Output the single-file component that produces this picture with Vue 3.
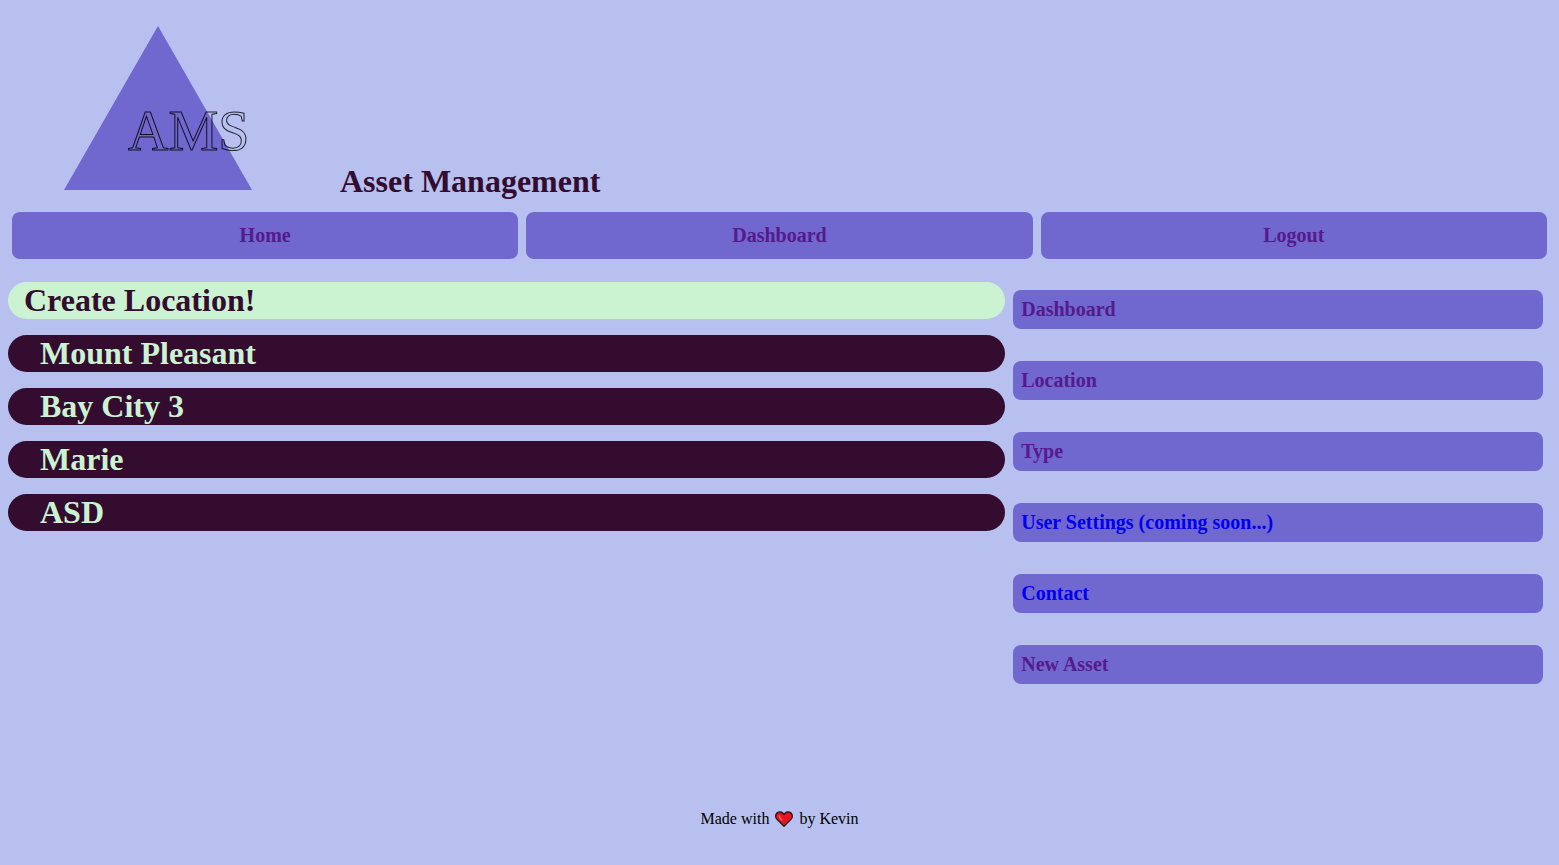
<script setup>
const navLinks = ['Home', 'Dashboard', 'Logout']
const locations = ['Mount Pleasant', 'Bay City 3', 'Marie', 'ASD']
const sideLinks = [
  { label: 'Dashboard', visited: true },
  { label: 'Location', visited: true },
  { label: 'Type', visited: true },
  { label: 'User Settings (coming soon...)', visited: false },
  { label: 'Contact', visited: false },
  { label: 'New Asset', visited: true },
]
</script>

<template>
  <div class="page">
    <header class="header">
      <svg class="logo" viewBox="0 0 300 200" role="img" aria-label="AMS">
        <polygon points="150,18 244,182 56,182" fill="#7067cf" />
        <text x="120" y="142" class="logo-text">AMS</text>
      </svg>
      <h1 class="title">Asset Management</h1>
    </header>

    <nav class="nav">
      <a v-for="label in navLinks" :key="label" href="#" class="nav-link">{{ label }}</a>
    </nav>

    <div class="content">
      <main class="locations">
        <a href="#" class="bar create">Create Location!</a>
        <a v-for="name in locations" :key="name" href="#" class="bar location">{{ name }}</a>
      </main>
      <aside class="side">
        <a
          v-for="link in sideLinks"
          :key="link.label"
          href="#"
          class="side-link"
          :class="{ visited: link.visited }"
        >{{ link.label }}</a>
      </aside>
    </div>

    <footer class="footer">
      <span>Made with</span>
      <svg class="heart" viewBox="0 0 18 16" role="img" aria-label="love">
        <path d="M9 15.2 1.800 8.100C.3 6.500.3 3.900 1.800 2.300 3.400.6 6 .5 7.600 2L9 3.300 10.400 2C12 .5 14.600.6 16.200 2.300 17.700 3.900 17.700 6.500 16.200 8.100Z" fill="#e81224" stroke="#1a1015" stroke-width="1.300" stroke-linejoin="round" />
        <path d="M4.200 5 Q4.800 7.400 6.900 8.900" fill="none" stroke="#f4685c" stroke-width="1.500" stroke-linecap="round" />
      </svg>
      <span>by Kevin</span>
    </footer>
  </div>
</template>

<style>
body {
  background: #b7c0ee;
}
</style>

<style scoped>
.page {
  box-sizing: border-box;
  min-height: 100vh;
  display: flex;
  flex-direction: column;
  padding: 8px 8px 36px;
  font-family: "Liberation Serif", "Times New Roman", serif;
  font-size: 16px;
  color: #000;
}

a {
  text-decoration: none;
}

.header {
  display: flex;
  align-items: flex-end;
  gap: 32px;
}

.logo {
  width: 300px;
  height: 200px;
}

.logo-text {
  font-size: 56px;
  fill: none;
  stroke: #000;
  stroke-width: 1px;
  stroke-opacity: 0.85;
}

.title {
  margin: 0 0 8px;
  font-size: 32px;
  line-height: 37px;
  color: #330c2f;
}

.nav {
  display: grid;
  grid-template-columns: repeat(3, 1fr);
  gap: 8px;
  margin: 4px 4px 0;
}

.nav-link {
  padding: 12px;
  border-radius: 8px;
  background: #7067cf;
  color: #551a8b;
  font-size: 20px;
  font-weight: bold;
  line-height: 23px;
  text-align: center;
}

.content {
  flex: 1;
  display: grid;
  grid-template-columns: 32fr 17fr;
  gap: 8px;
  margin: 23px 8px 0 0;
}

.locations {
  display: flex;
  flex-direction: column;
  gap: 16px;
}

.bar {
  border-radius: 20px;
  font-size: 32px;
  font-weight: bold;
  line-height: 37px;
}

.create {
  padding-left: 16px;
  background: #cbf3d2;
  color: #330c2f;
}

.location {
  padding-left: 32px;
  background: #330c2f;
  color: #cbf3d2;
}

.side {
  display: flex;
  flex-direction: column;
  gap: 32px;
  padding-top: 8px;
}

.side-link {
  padding: 8px;
  border-radius: 8px;
  background: #7067cf;
  color: #0000ee;
  font-size: 20px;
  font-weight: bold;
  line-height: 23px;
}

.side-link.visited {
  color: #551a8b;
}

.footer {
  display: flex;
  justify-content: center;
  align-items: center;
  gap: 6px;
  line-height: 20px;
}

.heart {
  width: 18px;
  height: 16px;
}
</style>
